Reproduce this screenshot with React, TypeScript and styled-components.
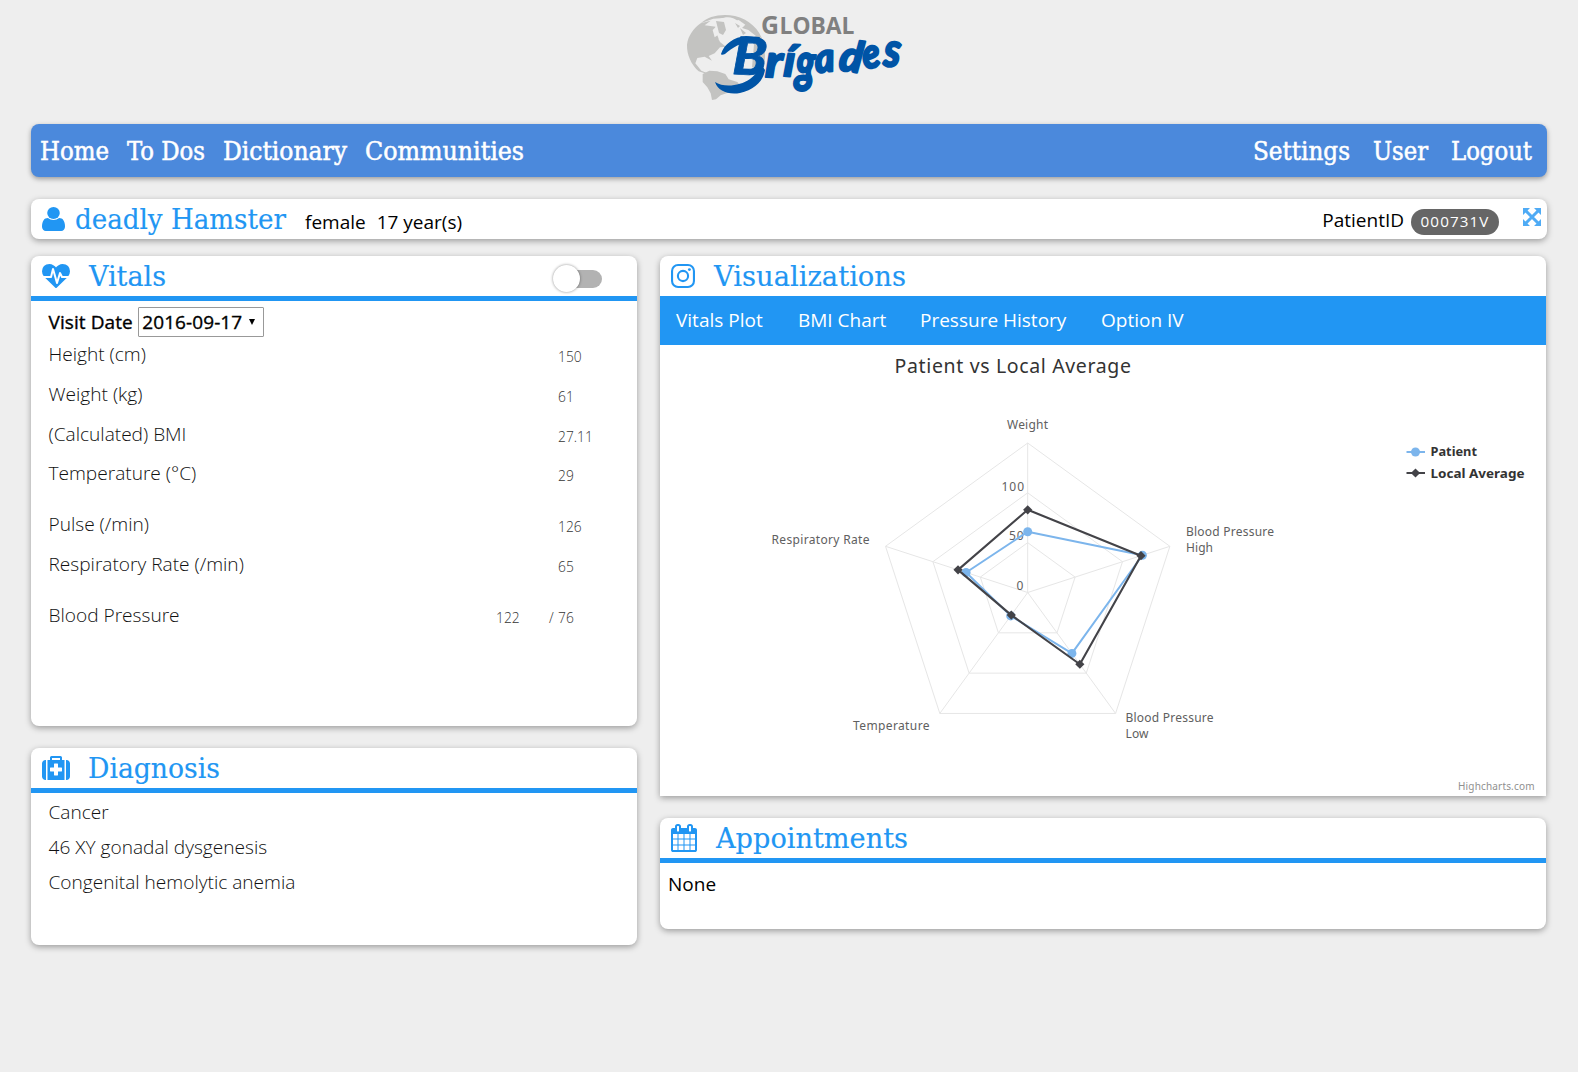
import React from "react";
import styled, { createGlobalStyle } from "styled-components";

const BLUE = "#2196f3";
const sans = `"Open Sans", "Noto Sans", sans-serif`;
const slab = `"Roboto Slab", "DejaVu Serif Condensed", "DejaVu Serif", serif`;
const chartFont = `"Lucida Grande", "Lucida Sans Unicode", "Noto Sans", "Open Sans", sans-serif`;

const GlobalStyle = createGlobalStyle`
  * { box-sizing: border-box; }
  body { margin: 0; background: #eee; font-family: ${sans}; font-size: 19px; color: #000; }
`;

const Page = styled.div`
  width: 1578px;
  height: 1072px;
  overflow: hidden;
  padding: 0 31px;
  display: flex;
  flex-direction: column;
`;

const LogoWrap = styled.header`
  height: 124px;
  padding-top: 8px;
  padding-left: 649px;
`;

const Nav = styled.nav`
  height: 53px;
  flex: none;
  padding: 0 15px 0 9px;
  background: #4b89dc;
  border-radius: 8px;
  box-shadow: 0 2px 5px rgba(0, 0, 0, 0.35);
  display: flex;
  justify-content: space-between;
  align-items: center;
`;

const NavGroup = styled.div<{ $gap: number }>`
  display: flex;
  gap: ${(p) => p.$gap}px;
`;

const NavLink = styled.a<{ $w: number }>`
  width: ${(p) => p.$w}px;
  color: #fff;
`;

const card = `
  background: #fff;
  box-shadow: 0 2px 6px rgba(0, 0, 0, 0.35);
`;

const PatientBar = styled.section`
  ${card}
  height: 40px;
  flex: none;
  margin-top: 22px;
  border-radius: 8px;
  padding: 0 6px 0 11px;
  display: flex;
  align-items: flex-start;
`;

const IconBox = styled.span<{ $w: number; $top?: number }>`
  width: ${(p) => p.$w}px;
  flex: none;
  line-height: 0;
  padding-top: ${(p) => p.$top ?? 6}px;
`;

const Demographic = styled.span<{ $first?: boolean }>`
  line-height: 26px;
  padding-top: 10px;
  margin-left: ${(p) => (p.$first ? 19 : 11)}px;
  white-space: nowrap;
`;

const PatientId = styled.div`
  margin-left: auto;
  display: flex;
  align-items: flex-start;
  padding-top: 8px;
  line-height: 26px;
`;

const Badge = styled.span`
  width: 88px;
  height: 26px;
  margin: 2px 24px 0 7px;
  border-radius: 13px;
  background: #666;
  color: #fff;
  font-size: 15.2px;
  line-height: 25px;
  letter-spacing: 1.1px;
  text-align: center;
`;

const Columns = styled.main`
  display: grid;
  grid-template-columns: 606px 886px;
  column-gap: 23px;
  margin-top: 17px;
  align-items: start;
`;

const Column = styled.div`
  display: grid;
  row-gap: 22px;
`;

const Card = styled.section<{ $h: number; $square?: boolean }>`
  ${card}
  height: ${(p) => p.$h}px;
  border-radius: ${(p) => (p.$square ? "8px 8px 0 0" : "8px")};
`;

const CardHeader = styled.div<{ $line?: boolean }>`
  height: ${(p) => (p.$line ? 45 : 40)}px;
  border-bottom: ${(p) => (p.$line ? `5px solid ${BLUE}` : "0")};
  padding: 0 35px 0 11px;
  display: flex;
`;

const Toggle = styled.div`
  width: 49px;
  height: 28px;
  margin: 9px 0 0 auto;
  display: flex;
  align-items: center;
  justify-content: flex-end;
  position: relative;
`;

const Track = styled.div`
  width: 36px;
  height: 18px;
  border-radius: 9px;
  background: #b2b2b2;
`;

const Knob = styled.div`
  position: absolute;
  left: 0;
  top: 0;
  width: 27px;
  height: 27px;
  border-radius: 50%;
  background: #fff;
  box-shadow: 0 0 3px rgba(0, 0, 0, 0.45);
`;

const VisitRow = styled.div`
  display: flex;
  gap: 5px;
  padding: 6px 0 0 17.5px;
  line-height: 30px;
  -webkit-text-stroke: 0.35px #000;
  letter-spacing: 0.08px;
`;

const VisitSelect = styled.div`
  width: 126px;
  height: 30px;
  border: 1px solid #999;
  border-radius: 1px;
  padding: 0 8px 0 3.5px;
  line-height: 28px;
  display: flex;
  justify-content: space-between;
  align-items: center;
`;

const Caret = styled.span`
  border: 3px solid transparent;
  border-top: 6px solid #000;
  border-bottom: 0;
`;

const Rows = styled.div`
  padding: 2px 17.5px 0;
`;

const Row = styled.div<{ $h: number }>`
  height: ${(p) => p.$h}px;
  display: grid;
  grid-template-columns: 447.5px 53px 9px 50px;
  line-height: 30px;
  font-weight: 300;
  font-size: 19.1px;
  color: #111;
`;

const Value = styled.span`
  font-size: 13.8px;
  line-height: 35px;
  white-space: nowrap;
  color: #333;
`;

const Diagnoses = styled.ul`
  margin: 0;
  padding: 2px 17.5px;
  list-style: none;
  font-weight: 300;
  font-size: 19.1px;
  line-height: 35px;
  color: #111;
`;

const Tabs = styled.div`
  height: 49px;
  background: ${BLUE};
  color: #fff;
  display: flex;
  gap: 34px;
  padding-left: 16px;
  line-height: 49px;
`;

const Tab = styled.span<{ $w: number }>`
  width: ${(p) => p.$w}px;
  white-space: nowrap;
`;

const None = styled.p`
  margin: 0;
  padding: 8px;
  line-height: 26px;
`;

const Block = styled.svg`
  display: block;
  overflow: visible;
`;

/* Slab heading set to a fixed measure so its length never depends on the fallback face. */
function Slab({ text, width, size = 27, base = 30, color = BLUE, weight = 0.15 }: {
  text: string; width: number; size?: number; base?: number; color?: string; weight?: number;
}) {
  return (
    <Block width={width} height={40}>
      <text x={0} y={base} fontFamily={slab} fontSize={size} fill={color} stroke={color} strokeWidth={weight} textLength={width} lengthAdjust="spacingAndGlyphs">
        {text}
      </text>
    </Block>
  );
}

const UserIcon = () => (
  <Block width={23} height={24} viewBox="256 128 1280 1536" preserveAspectRatio="none" fill={BLUE}>
    <path d="M1536 1399q0 109-62.5 187t-150.5 78h-854q-88 0-150.5-78t-62.5-187q0-85 8.5-160.5t31.5-152 58.5-131 94-89 134.5-34.5q131 128 313 128t313-128q76 0 134.5 34.5t94 89 58.5 131 31.5 152 8.5 160.5z" />
    <ellipse cx={896} cy={512} rx={350} ry={384} />
  </Block>
);

const HeartbeatIcon = () => (
  <Block width={28} height={28} viewBox="0 0 1792 1792" fill={BLUE}>
    <path d="M1280 1024h305q-5 6-10 10.5t-9 7.5l-3 4-623 600q-18 18-44 18t-44-18l-624-602q-5-2-21-20h369q22 0 39.5-13.5t22.5-34.5l70-281 190 667q6 20 23 33t39 13q21 0 38-13t23-33l146-485 56 112q18 35 57 35zm512-428q0 145-103 300h-369l-111-221q-8-17-25.5-27t-36.5-8q-45 5-56 46l-129 430-196-686q-6-20-23.5-33t-39.5-13-39 13.5-22 34.5l-116 464h-423q-103-155-103-300 0-220 127-344t351-124q62 0 126.5 21.5t120 58 95.5 68.5 76 68q36-36 76-68t95.5-68.5 120-58 126.5-21.5q224 0 351 124t127 344z" />
  </Block>
);

const MedkitIcon = () => (
  <Block width={28} height={28} viewBox="0 0 1792 1792" fill={BLUE}>
    <path d="M1280 1088v-192q0-14-9-23t-23-9h-224v-224q0-14-9-23t-23-9h-192q-14 0-23 9t-9 23v224h-224q-14 0-23 9t-9 23v192q0 14 9 23t23 9h224v224q0 14 9 23t23 9h192q14 0 23-9t9-23v-224h224q14 0 23-9t9-23zm-640-704h512v-128h-512v128zm-384 0v1280h-32q-92 0-158-66t-66-158v-832q0-92 66-158t158-66h32zm1184 0v1280h-1088v-1280h160v-160q0-40 28-68t68-28h576q40 0 68 28t28 68v160h160zm352 224v832q0 92-66 158t-158 66h-32v-1280h32q92 0 158 66t66 158z" />
  </Block>
);

const CalendarIcon = () => (
  <Block width={26} height={28} viewBox="64 0 1664 1792" fill={BLUE}>
    <path d="M192 1664h288v-288h-288v288zm352 0h320v-288h-320v288zm-352-352h288v-320h-288v320zm352 0h320v-320h-320v320zm-352-384h288v-288h-288v288zm736 736h320v-288h-320v288zm-384-736h320v-288h-320v288zm768 736h288v-288h-288v288zm-384-352h320v-320h-320v320zm-352-864v-288q0-13-9.5-22.5t-22.5-9.5h-64q-13 0-22.5 9.5t-9.5 22.5v288q0 13 9.5 22.5t22.5 9.5h64q13 0 22.5-9.5t9.5-22.5zm736 864h288v-320h-288v320zm-384-384h320v-288h-320v288zm384 0h288v-288h-288v288zm32-480v-288q0-13-9.5-22.5t-22.5-9.5h-64q-13 0-22.5 9.5t-9.5 22.5v288q0 13 9.5 22.5t22.5 9.5h64q13 0 22.5-9.5t9.5-22.5zm384-64v1280q0 52-38 90t-90 38h-1408q-52 0-90-38t-38-90v-1280q0-52 38-90t90-38h128v-96q0-66 47-113t113-47h64q66 0 113 47t47 113v96h384v-96q0-66 47-113t113-47h64q66 0 113 47t47 113v96h128q52 0 90 38t38 90z" />
  </Block>
);

const InstagramIcon = () => (
  <Block width={24} height={24} viewBox="0 0 24 24" fill="none" stroke={BLUE} strokeWidth={2.1}>
    <rect x={1.05} y={1.05} width={21.9} height={21.9} rx={6} />
    <circle cx={12} cy={12} r={5.1} />
    <circle cx={18.4} cy={5.6} r={1.45} fill={BLUE} stroke="none" />
  </Block>
);

const ExpandIcon = () => (
  <Block width={18} height={19} viewBox="0 -1 18 19" fill="#4fabf5">
    <path d="M0 0H7L0 7ZM18 0V7L11 0ZM0 18V11L7 18ZM18 18H11L18 11Z" />
    <path d="M3 3L15 15M15 3L3 15" stroke="#4fabf5" strokeWidth={3} />
  </Block>
);

/* Wordmark letters after the initial: [letter, x, baseline, size, horizontal scale, tilt] */
const WORDMARK: [string, number, number, number, number, number][] = [
  ["r", 85, 69, 46, 1.05, 2],
  ["í", 103, 68, 44, 1, 4],
  ["g", 115, 73, 54, 0.72, 2],
  ["a", 136, 65, 41, 0.92, -6],
  ["d", 158, 62, 43, 0.98, 8],
  ["e", 184, 61, 42, 0.86, -8],
  ["s", 203, 58, 48, 0.86, 4],
];

function Logo() {
  return (
    <Block width={230} height={100} viewBox="0 0 230 100">
      <g transform="scale(0.3333)" fill="#c3c3c1">
        <path d="M62 46 C85 24 125 16 165 24 C205 34 240 62 250 105 C257 135 257 160 248 184 L216 178 L222 110 L212 92 L228 84 L205 66 L186 60 L196 50 L176 36 L160 40 L168 54 L150 46 L130 30 L100 32 Z" />
        <path d="M62 46 L92 38 L74 52 L108 56 L98 66 L104 88 L118 78 L116 96 L140 104 L142 116 L120 118 L104 136 L86 144 L96 158 L74 146 L52 150 L46 166 L64 188 L88 198 L74 196 L56 190 C34 170 20 140 21 110 C24 84 40 62 62 46 Z" />
        <path d="M68 198 L88 188 L112 190 L136 198 L146 214 L172 222 L184 236 L150 252 L122 262 L108 274 L96 276 L92 256 L82 238 L68 222 Z" />
      </g>
      <path d="M40 11 C47 8 53 9 58 13 L60 19 L69 24 L74 31 L69 34 L55 36 L45 38 L40 34 L36 24 L35 14 Z" fill="#eee" />
      <path d="M36 13 L44 14 L46 22 L43 27 L39 25 Z M55 15 L60 18 L58 20 Z M60 20 L66 25 L63 27 Z" fill="#c3c3c1" />
      <g fontFamily={sans} fontWeight={700} fill="#808080">
        <text x={81} y={26} fontSize={25} textLength={18} lengthAdjust="spacingAndGlyphs">G</text>
        <text x={99.5} y={25.5} fontSize={22.5} textLength={75} lengthAdjust="spacingAndGlyphs">LOBAL</text>
      </g>
      <g fill="#0054a6">
        <path d="M35 74 C44 80 60 78 70 71 C77 66 80 60 81 56 L85 62 C83 74 74 82 60 85 C48 87 38 83 35 74 Z" />
        <path d="M41 46 C44 36 54 29 66 28 L80 29 L78 34 C64 32 53 39 45 46 C43 47 41 47 41 46 Z" />
      </g>
      <g fill="#0054a6" stroke="#0054a6" strokeLinejoin="round" fontFamily="Lato, sans-serif" fontWeight={900} fontStyle="italic">
        <g transform="translate(52 66) rotate(3)">
          <text fontSize={52} strokeWidth={0.8} textLength={34} lengthAdjust="spacingAndGlyphs">B</text>
        </g>
        {WORDMARK.map(([ch, x, y, size, sx, tilt]) => (
          <g key={ch} transform={`translate(${x} ${y}) rotate(${tilt}) scale(${sx} 1)`}>
            <text fontSize={size} strokeWidth={2}>{ch}</text>
          </g>
        ))}
      </g>
    </Block>
  );
}

const CX = 367.7;
const CY = 247.5;
const point = (i: number, v: number) => {
  const a = (Math.PI * 2 * i) / 5;
  const r = (v / 150) * 149.5;
  return [CX + r * Math.sin(a), CY - r * Math.cos(a)];
};
const ring = (values: number[]) => values.map((v, i) => point(i, v).join(",")).join(" ");
const PATIENT = [61, 121, 75.5, 29, 65];
const AVERAGE = [83, 119.5, 89, 28, 73.5];

const LABELS: [string, number, number, number][] = [
  ["Weight", 347, 84, 41],
  ["Blood Pressure", 526, 191, 88],
  ["High", 526, 207, 27],
  ["Blood Pressure", 465.5, 377, 88],
  ["Low", 465.5, 393, 23],
  ["Temperature", 193, 385, 76.5],
  ["Respiratory Rate", 111.5, 199, 98],
  ["100", 341.5, 146, 22.5],
  ["50", 349, 195, 14.5],
  ["0", 356.5, 245, 7.5],
];

function Diamond({ x, y, r = 4.6 }: { x: number; y: number; r?: number }) {
  return <path d={`M${x} ${y - r}L${x + r} ${y}L${x} ${y + r}L${x - r} ${y}Z`} fill="#434348" />;
}

function RadarChart() {
  return (
    <Block width={886} height={451} fontFamily={chartFont}>
      <text x={234.5} y={28} fontSize={19.5} fill="#333" textLength={236.5}>Patient vs Local Average</text>
      <g fill="none" stroke="#e6e6e6" strokeWidth={1}>
        {[50, 100, 150].map((v) => <polygon key={v} points={ring([v, v, v, v, v])} />)}
        {[0, 1, 2, 3, 4].map((i) => {
          const [x, y] = point(i, 150);
          return <line key={i} x1={CX} y1={CY} x2={x} y2={y} />;
        })}
      </g>
      <g fontSize={12} fill="#606060">
        {LABELS.map(([t, x, y, w]) => <text key={`${t}${y}`} x={x} y={y} textLength={w}>{t}</text>)}
      </g>
      <polygon points={ring(PATIENT)} fill="none" stroke="#7cb5ec" strokeWidth={2} strokeLinejoin="round" />
      {PATIENT.map((v, i) => {
        const [x, y] = point(i, v);
        return <circle key={i} cx={x} cy={y} r={4.5} fill="#7cb5ec" />;
      })}
      <polygon points={ring(AVERAGE)} fill="none" stroke="#434348" strokeWidth={2.1} strokeLinejoin="round" />
      {AVERAGE.map((v, i) => {
        const [x, y] = point(i, v);
        return <Diamond key={i} x={x} y={y} />;
      })}
      <path d="M746.5 107H765" stroke="#7cb5ec" strokeWidth={2} />
      <circle cx={755.5} cy={107} r={4.5} fill="#7cb5ec" />
      <path d="M746.5 128H765" stroke="#434348" strokeWidth={2} />
      <Diamond x={755.5} y={128} />
      <g fontSize={13} fontWeight={700} fill="#333">
        <text x={770.5} y={111} textLength={46.5} lengthAdjust="spacingAndGlyphs">Patient</text>
        <text x={770.5} y={133} textLength={94} lengthAdjust="spacingAndGlyphs">Local Average</text>
      </g>
      <text x={798} y={445} fontSize={10} fill="#909090" textLength={76.5}>Highcharts.com</text>
    </Block>
  );
}

const NAV_LEFT: [string, number][] = [["Home", 69], ["To Dos", 78], ["Dictionary", 124], ["Communities", 159]];
const NAV_RIGHT: [string, number][] = [["Settings", 97], ["User", 55], ["Logout", 81]];

const VITALS: { label: string; h: number; value: string; first?: string }[] = [
  { label: "Height (cm)", h: 40, value: "150" },
  { label: "Weight (kg)", h: 40, value: "61" },
  { label: "(Calculated) BMI", h: 39, value: "27.11" },
  { label: "Temperature (°C)", h: 51, value: "29" },
  { label: "Pulse (/min)", h: 40, value: "126" },
  { label: "Respiratory Rate (/min)", h: 51, value: "65" },
  { label: "Blood Pressure", h: 40, value: "76", first: "122" },
];

const navItem = ([text, w]: [string, number]) => (
  <NavLink key={text} $w={w}>
    <Slab text={text} width={w} size={25.5} base={29} color="#fff" weight={0.5} />
  </NavLink>
);

export default function App() {
  return (
    <Page>
      <GlobalStyle />
      <LogoWrap><Logo /></LogoWrap>
      <Nav>
        <NavGroup $gap={18}>{NAV_LEFT.map(navItem)}</NavGroup>
        <NavGroup $gap={23}>{NAV_RIGHT.map(navItem)}</NavGroup>
      </Nav>
      <PatientBar>
        <IconBox $w={33} $top={8}><UserIcon /></IconBox>
        <Slab text="deadly Hamster" width={211} />
        <Demographic $first>female</Demographic>
        <Demographic>17 year(s)</Demographic>
        <PatientId>
          PatientID
          <Badge>000731V</Badge>
          <ExpandIcon />
        </PatientId>
      </PatientBar>
      <Columns>
        <Column>
          <Card $h={470}>
            <CardHeader $line>
              <IconBox $w={47}><HeartbeatIcon /></IconBox>
              <Slab text="Vitals" width={77} />
              <Toggle><Track /><Knob /></Toggle>
            </CardHeader>
            <VisitRow>
              Visit Date
              <VisitSelect>2016-09-17<Caret /></VisitSelect>
            </VisitRow>
            <Rows>
              {VITALS.map((v) => (
                <Row key={v.label} $h={v.h}>
                  {v.label}
                  <Value>{v.first}</Value>
                  <Value>{v.first && "/"}</Value>
                  <Value>{v.value}</Value>
                </Row>
              ))}
            </Rows>
          </Card>
          <Card $h={197}>
            <CardHeader $line>
              <IconBox $w={46}><MedkitIcon /></IconBox>
              <Slab text="Diagnosis" width={132} />
            </CardHeader>
            <Diagnoses>
              <li>Cancer</li>
              <li>46 XY gonadal dysgenesis</li>
              <li>Congenital hemolytic anemia</li>
            </Diagnoses>
          </Card>
        </Column>
        <Column>
          <Card $h={540} $square>
            <CardHeader>
              <IconBox $w={43} $top={8}><InstagramIcon /></IconBox>
              <Slab text="Visualizations" width={192} />
            </CardHeader>
            <Tabs>
              <Tab $w={88}>Vitals Plot</Tab>
              <Tab $w={88}>BMI Chart</Tab>
              <Tab $w={147}>Pressure History</Tab>
              <Tab $w={84}>Option IV</Tab>
            </Tabs>
            <RadarChart />
          </Card>
          <Card $h={111}>
            <CardHeader $line>
              <IconBox $w={45}><CalendarIcon /></IconBox>
              <Slab text="Appointments" width={192} />
            </CardHeader>
            <None>None</None>
          </Card>
        </Column>
      </Columns>
    </Page>
  );
}
